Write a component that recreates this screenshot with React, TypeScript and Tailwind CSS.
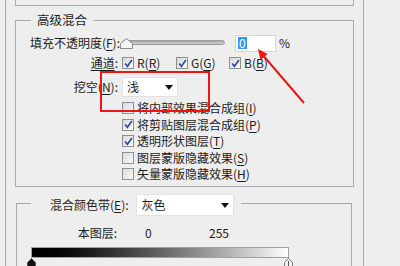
import type { ReactNode } from "react"

const U = ({ children }: { children: ReactNode }) => (
  <span className="underline underline-offset-[2px]">{children}</span>
)

const Check = ({ checked }: { checked?: boolean }) => (
  <span className="flex h-[12px] w-[12px] shrink-0 items-center justify-center border border-[#8f8f8f] bg-linear-to-br from-[#d9d9d9] to-[#fbfbfb]">
    {checked && (
      <svg width="9" height="9" viewBox="0 0 9 9">
        <path d="M1.2 4.4 L3.4 7.3 L7.9 1" fill="none" stroke="#2b4a9e" strokeWidth="1.6" />
      </svg>
    )}
  </span>
)

const Arrow = () => (
  <svg width="8" height="5" viewBox="0 0 8 5">
    <path d="M0 0 H8 L4 5 Z" fill="#111" />
  </svg>
)

const options = [
  { label: "将内部效果混合成组", key: "I", checked: false },
  { label: "将剪贴图层混合成组", key: "P", checked: true },
  { label: "透明形状图层", key: "T", checked: true },
  { label: "图层蒙版隐藏效果", key: "S", checked: false },
  { label: "矢量蒙版隐藏效果", key: "H", checked: false },
]

export default function App() {
  return (
    <div className="relative h-[266px] w-[400px] overflow-hidden bg-[#eeeeee] font-['Noto_Sans_CJK_SC',sans-serif] text-[12px] leading-[16px] text-[#1c1c1c]">
      <div className="ml-[5px] h-full w-[359px] border-x border-[#a9a9a9] pl-[9px]">
        {/* end of the group above */}
        <div className="h-[6px] w-[339px] border-x border-b border-[#ababab]" />

        <fieldset className="mt-[6px] h-[175px] w-[339px] border border-[#ababab]">
          <legend className="ml-[15px] px-[6px] text-[12.5px] leading-[16px]">高级混合</legend>

          <div className="mt-[5px] flex h-[20px] items-center">
            <span className="w-[104px] text-right">
              填充不透明度(<U>F</U>):
            </span>
            <div className="relative ml-[2px] h-[20px] w-[103px]">
              <div className="absolute left-0 right-0 top-[7px] h-[5px] rounded-full border border-[#9c9c9c] bg-linear-to-b from-[#a5a5a5] to-[#d2d2d2]" />
              <svg className="absolute left-[-2px] top-[5px]" width="13" height="11" viewBox="0 0 13 11">
                <path d="M6.5 0.5 L12.5 5.5 V10.5 H0.5 V5.5 Z" fill="#f4f4f4" stroke="#8a8a8a" />
              </svg>
            </div>
            <div className="ml-[10px] flex h-[17px] w-[41px] items-center border border-[#d6d6d6] bg-white pl-[2px]">
              <span className="bg-[#3399ff] px-[1px] leading-[12px] text-white">0</span>
            </div>
            <span className="ml-[3px]">%</span>
          </div>

          <div className="flex h-[20px] items-center">
            <span className="w-[104px] pr-[2px] text-right">
              <U>通道</U>:
            </span>
            <div className="ml-[2px] flex w-[54px] items-center gap-[3px]">
              <Check checked />
              <span>
                R(<U>R</U>)
              </span>
            </div>
            <div className="flex w-[53px] items-center gap-[3px]">
              <Check checked />
              <span>
                G(<U>G</U>)
              </span>
            </div>
            <div className="flex items-center gap-[3px]">
              <Check checked />
              <span>
                B(<U>B</U>)
              </span>
            </div>
          </div>

          <div className="mt-[4px] flex h-[20px] items-center">
            <span className="w-[104px] pr-[2px] text-right">
              挖空(<U>N</U>):
            </span>
            <div className="ml-[2px] flex h-[20px] w-[56px] items-center justify-between border border-[#e2e2e2] bg-white pl-[4px] pr-[4px]">
              <span>浅</span>
              <Arrow />
            </div>
          </div>

          <div className="mt-[3px] pl-[106px]">
            {options.map((o) => (
              <div key={o.key} className="flex h-[16.5px] items-center gap-[3px]">
                <Check checked={o.checked} />
                <span>
                  {o.label}(<U>{o.key}</U>)
                </span>
              </div>
            ))}
          </div>
        </fieldset>

        <fieldset className="ml-[1px] mt-[3px] h-[80px] w-[336px] border border-[#ababab]">
          <legend className="ml-[14px] pl-[19px] pr-[7px] pt-[4px]">
            <span className="flex items-center">
              <span>
                混合颜色带(<U>E</U>):
              </span>
              <span className="ml-[7px] flex h-[22px] w-[98px] items-center justify-between border border-[#e2e2e2] bg-white pl-[5px] pr-[4px]">
                <span>灰色</span>
                <Arrow />
              </span>
            </span>
          </legend>

          <div className="mt-[9px] flex h-[16px] items-center">
            <span className="w-[100px] text-right">本图层:</span>
            <span className="ml-[28px] w-[64px]">0</span>
            <span>255</span>
          </div>
          <div className="ml-[14px] mt-[6px] h-[11px] w-[258px] border border-[#a0a0a0] bg-linear-to-r from-black to-white" />
          <div className="ml-[10px] flex w-[266px] justify-between">
            <svg width="9" height="10" viewBox="0 0 9 10">
              <path d="M4.5 0.5 L8.5 4.5 V9.5 H0.5 V4.5 Z" fill="#111" stroke="#555" />
            </svg>
            <svg width="9" height="10" viewBox="0 0 9 10">
              <path d="M4.5 0.5 L8.5 4.5 V9.5 H0.5 V4.5 Z" fill="#f2f2f2" stroke="#7a7a7a" />
              <path d="M4.5 3 V9" stroke="#555" />
            </svg>
          </div>
        </fieldset>
      </div>

      {/* annotation: red box and arrow */}
      <div className="pointer-events-none absolute left-[100px] top-[71px] h-[41px] w-[110px] border-2 border-[#f01414]" />
      <svg className="pointer-events-none absolute left-0 top-0" width="400" height="266" viewBox="0 0 400 266">
        <line x1="304" y1="103" x2="261" y2="53" stroke="#f01414" strokeWidth="2" />
        <path d="M258 49 L260.5 60 L267.5 54 Z" fill="#f01414" />
      </svg>
    </div>
  )
}
